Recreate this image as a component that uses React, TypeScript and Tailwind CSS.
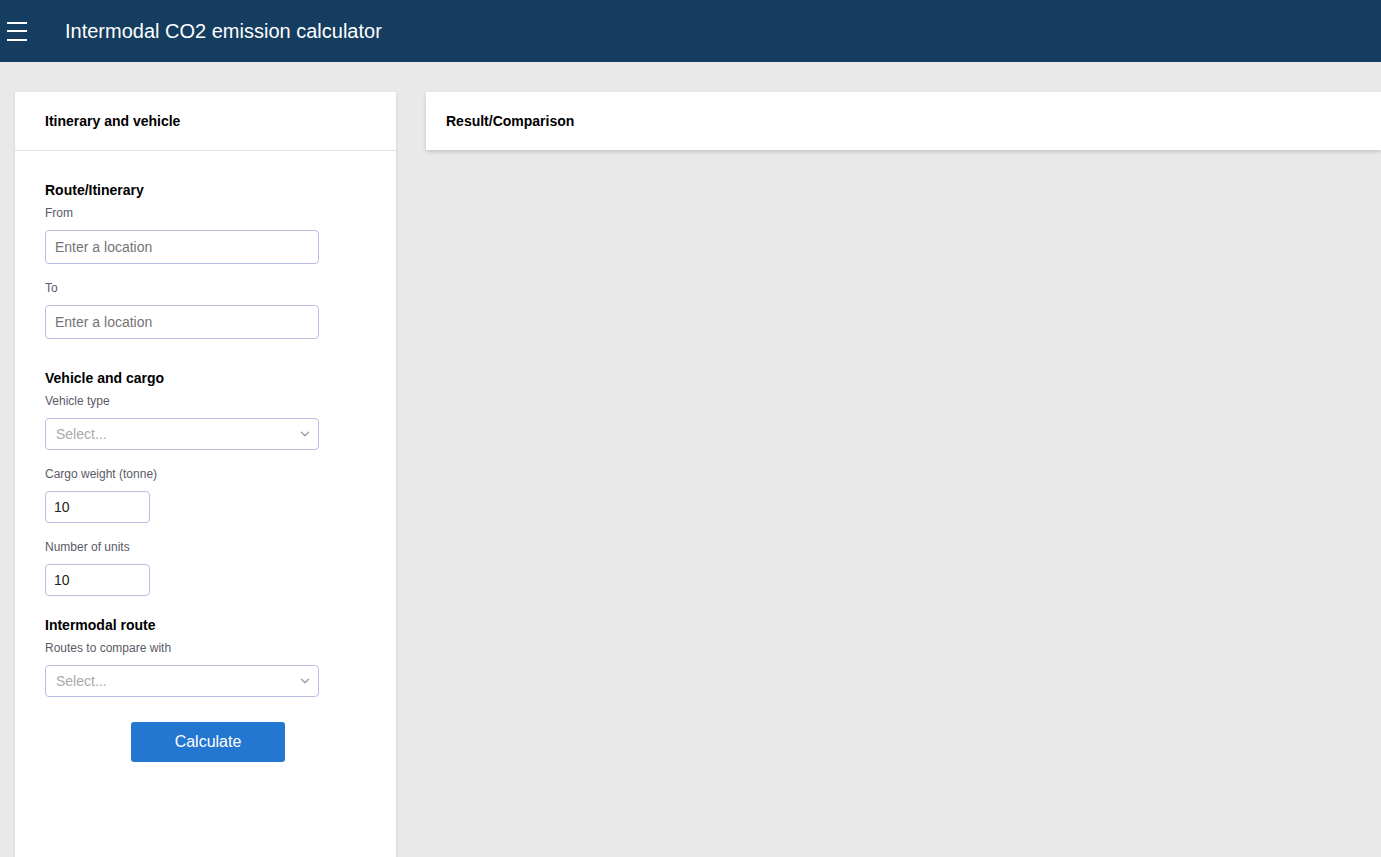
import { ChevronDown } from 'lucide-react';

const label = 'text-[12px] leading-[14px] text-[#5a5a68]';
const heading = 'text-[14px] leading-[16px] font-bold text-black';
const inputBox =
  'block h-[34px] w-[274px] rounded-[4px] border border-[#b9bee3] bg-white px-[9px] text-[14px] text-[#333] placeholder:text-[#757575] outline-none';

function SelectBox() {
  return (
    <div className="flex h-[32px] w-[274px] items-center justify-between rounded-[4px] border border-[#b9bee3] bg-white pl-[10px] pr-[6px]">
      <span className="text-[14px] text-[#aaaaaa]">Select...</span>
      <ChevronDown size={14} strokeWidth={2.5} className="text-[#a0a0a0]" />
    </div>
  );
}

export default function App() {
  return (
    <div className="min-h-screen bg-[#e9e9e9] font-['Liberation_Sans',Arial,sans-serif]">
      <header className="flex h-[62px] items-center bg-[#143d60]">
        <button className="ml-[7px] flex w-[20px] flex-col gap-[6.5px]">
          <span className="block h-[2px] w-[20px] bg-white" />
          <span className="block h-[2px] w-[20px] bg-white" />
          <span className="block h-[2px] w-[20px] bg-white" />
        </button>
        <h1 className="ml-[38px] text-[20px] text-white">Intermodal CO2 emission calculator</h1>
      </header>

      <main className="flex items-start gap-[30px] pl-[15px] pt-[30px]">
        <section className="h-[800px] w-[381px] shrink-0 bg-white shadow-sm">
          <div className="flex h-[59px] items-center border-b border-[#e2e2e2] px-[30px]">
            <h2 className={heading}>Itinerary and vehicle</h2>
          </div>
          <div className="px-[30px] pt-[31px]">
            <h3 className={heading}>Route/Itinerary</h3>
            <p className={`${label} mt-[8px]`}>From</p>
            <input className={`${inputBox} mt-[10px]`} placeholder="Enter a location" />
            <p className={`${label} mt-[17px]`}>To</p>
            <input className={`${inputBox} mt-[10px]`} placeholder="Enter a location" />

            <h3 className={`${heading} mt-[31px]`}>Vehicle and cargo</h3>
            <p className={`${label} mt-[8px]`}>Vehicle type</p>
            <div className="mt-[10px]">
              <SelectBox />
            </div>
            <p className={`${label} mt-[17px]`}>Cargo weight (tonne)</p>
            <input
              className="mt-[10px] block h-[32px] w-[105px] rounded-[4px] border border-[#b9bee3] bg-white px-[8px] text-[14px] text-[#222] outline-none"
              defaultValue="10"
            />
            <p className={`${label} mt-[17px]`}>Number of units</p>
            <input
              className="mt-[10px] block h-[32px] w-[105px] rounded-[4px] border border-[#b9bee3] bg-white px-[8px] text-[14px] text-[#222] outline-none"
              defaultValue="10"
            />

            <h3 className={`${heading} mt-[21px]`}>Intermodal route</h3>
            <p className={`${label} mt-[8px]`}>Routes to compare with</p>
            <div className="mt-[10px]">
              <SelectBox />
            </div>

            <button className="ml-[86px] mt-[25px] h-[40px] w-[154px] rounded-[3px] bg-[#2477d0] text-[16px] text-white">
              Calculate
            </button>
          </div>
        </section>

        <section className="flex h-[58px] flex-1 items-center bg-white px-[20px] shadow-[0_2px_4px_rgba(0,0,0,0.15)]">
          <h2 className={heading}>Result/Comparison</h2>
        </section>
      </main>
    </div>
  );
}
